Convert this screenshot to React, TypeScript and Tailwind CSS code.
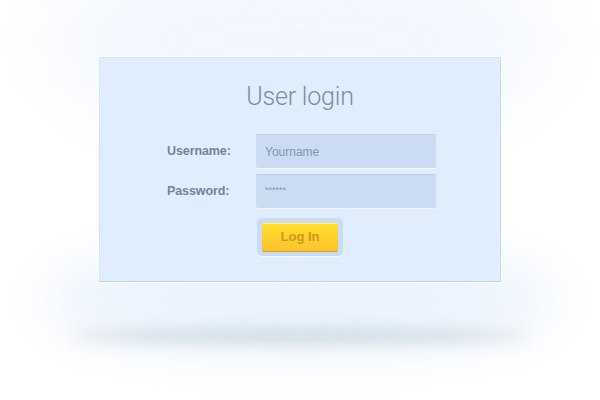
import { useState } from "react";

function App() {
  const [username, setUsername] = useState("");
  const [password, setPassword] = useState("");

  return (
    <div className="relative flex h-[400px] w-[600px] flex-col items-center overflow-hidden bg-white font-['Liberation_Sans',Arial,sans-serif]">
      {/* soft glow around the card and floor shadow */}
      <div className="pointer-events-none absolute left-1/2 top-[-60px] h-[200px] w-[520px] -translate-x-1/2 rounded-[50%] bg-[#eef4fd] opacity-70 blur-[40px]" />
      <div className="pointer-events-none absolute left-1/2 top-[250px] h-[100px] w-[520px] -translate-x-1/2 rounded-[50%] bg-[#e8f1fc] blur-[30px]" />
      <div className="pointer-events-none absolute left-1/2 top-[330px] h-[12px] w-[460px] -translate-x-1/2 rounded-[50%] bg-[#b9c9d3] opacity-75 blur-[8px]" />

      <div className="relative mt-[57px] h-[225px] w-[402px] border border-[#d6e4f7] border-b-[#bfd3ee] border-r-[#c6d8f0] bg-[#e0edfc] shadow-[0_0_0_1px_rgba(255,255,255,0.7)]">
        <h1 className="mt-[21px] text-center font-['Roboto',sans-serif] text-[25px] font-light leading-[36px] tracking-[-0.2px] text-[#7b8da6]">
          User login
        </h1>

        <div className="ml-[67px] mt-[19px] flex flex-col gap-[6px]">
          <div className="flex items-center">
            <label className="w-[89px] text-[12.5px] font-bold tracking-[-0.1px] text-[#72849c]">Username:</label>
            <input
              value={username}
              onChange={(e) => setUsername(e.target.value)}
              placeholder="Yourname"
              className="h-[34px] w-[180px] rounded-[2px] border-t border-t-[#bccfeb] bg-[#cbdcf2] px-[9px] text-[12px] text-[#7f91ab] shadow-[0_1px_0_#f4f8fe] outline-none placeholder:text-[#8395ae]"
            />
          </div>
          <div className="flex items-center">
            <label className="w-[89px] text-[12.5px] font-bold tracking-[-0.1px] text-[#72849c]">Password:</label>
            <input
              type="text"
              value={password}
              onChange={(e) => setPassword(e.target.value)}
              placeholder="******"
              className="h-[34px] w-[180px] rounded-[2px] border-t border-t-[#bccfeb] bg-[#cbdcf2] px-[9px] pb-[4px] text-[9px] text-[#7f91ab] shadow-[0_1px_0_#f4f8fe] outline-none placeholder:text-[#8395ae]"
            />
          </div>

          <div className="ml-[90px] mt-[4px] w-fit rounded-[5px] bg-[#cadcf3] p-[5px] shadow-[0_1px_0_#f7faff]">
            <button className="block h-[28px] w-[76px] rounded-[2px] bg-[linear-gradient(#ffe02a,#fdc22b)] text-[13px] font-bold text-[#c89b1a] shadow-[inset_0_1px_0_#fff27a,0_1px_0_#d9a21c]">
              Log In
            </button>
          </div>
        </div>
      </div>
    </div>
  );
}

export default App;
